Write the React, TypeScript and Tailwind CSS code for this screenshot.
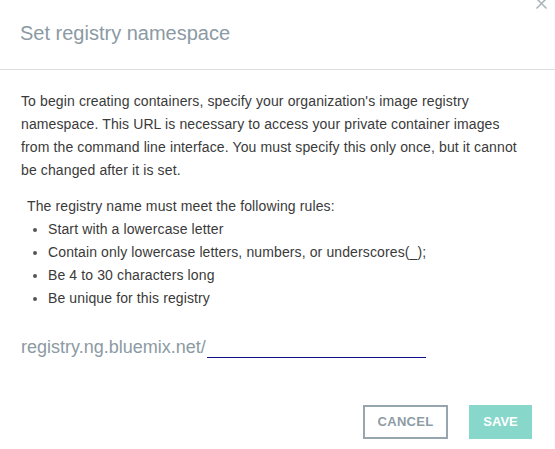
import React from "react";

export default function App() {
  const rules = [
    "Start with a lowercase letter",
    "Contain only lowercase letters, numbers, or underscores(_);",
    "Be 4 to 30 characters long",
    "Be unique for this registry",
  ];
  return (
    <div
      className="relative w-[555px] h-[449px] overflow-hidden bg-white"
      style={{ fontFamily: '"Liberation Sans", Arial, sans-serif' }}
    >
      <svg
        className="absolute left-[535px] top-[-3px]"
        width="13"
        height="13"
        viewBox="0 0 13 13"
      >
        <path d="M1.5 1.5 L11.5 11.5 M11.5 1.5 L1.5 11.5" stroke="#abb5bc" strokeWidth="1.6" fill="none" />
      </svg>

      <div className="pt-[22px] pl-[20px] h-[69px]">
        <h1 className="text-[20px] leading-[23px] text-[#8b9aa4]">Set registry namespace</h1>
      </div>
      <div className="h-px bg-[#dcdfe1]" />

      <div className="pt-[20px] pl-[21px] pr-[30px] text-[14px] leading-[23px] tracking-[0.12px] text-[#3a3a3a]">
        <p>
          To begin creating containers, specify your organization's image registry
          <br />
          namespace. This URL is necessary to access your private container images
          <br />
          from the command line interface. You must specify this only once, but it cannot
          <br />
          be changed after it is set.
        </p>
        <div className="mt-[13px] pl-[6px]">
          <p>The registry name must meet the following rules:</p>
          <ul>
            {rules.map((r) => (
              <li key={r} className="flex items-center">
                <span className="ml-[6px] w-[4px] h-[4px] rounded-full bg-[#555]" />
                <span className="ml-[11px]">{r}</span>
              </li>
            ))}
          </ul>
        </div>
      </div>

      <div className="mt-[25px] pl-[21px] flex items-start">
        <span className="text-[18px] leading-[24px] text-[#8b9aa4]">registry.ng.bluemix.net/</span>
        <div className="ml-[1px] w-[219px] h-[23px] border-b border-[#10108a]" />
      </div>

      <div className="mt-[46px] flex justify-end gap-[21px] pr-[23px]">
        <button className="w-[85px] h-[34px] border-2 border-[#97a5ae] text-[13px] font-bold tracking-[0.3px] text-[#8e9ca6] flex items-center justify-center">
          CANCEL
        </button>
        <button className="w-[63px] h-[34px] bg-[#87d7ca] text-[13px] font-bold text-white flex items-center justify-center">
          SAVE
        </button>
      </div>
    </div>
  );
}
